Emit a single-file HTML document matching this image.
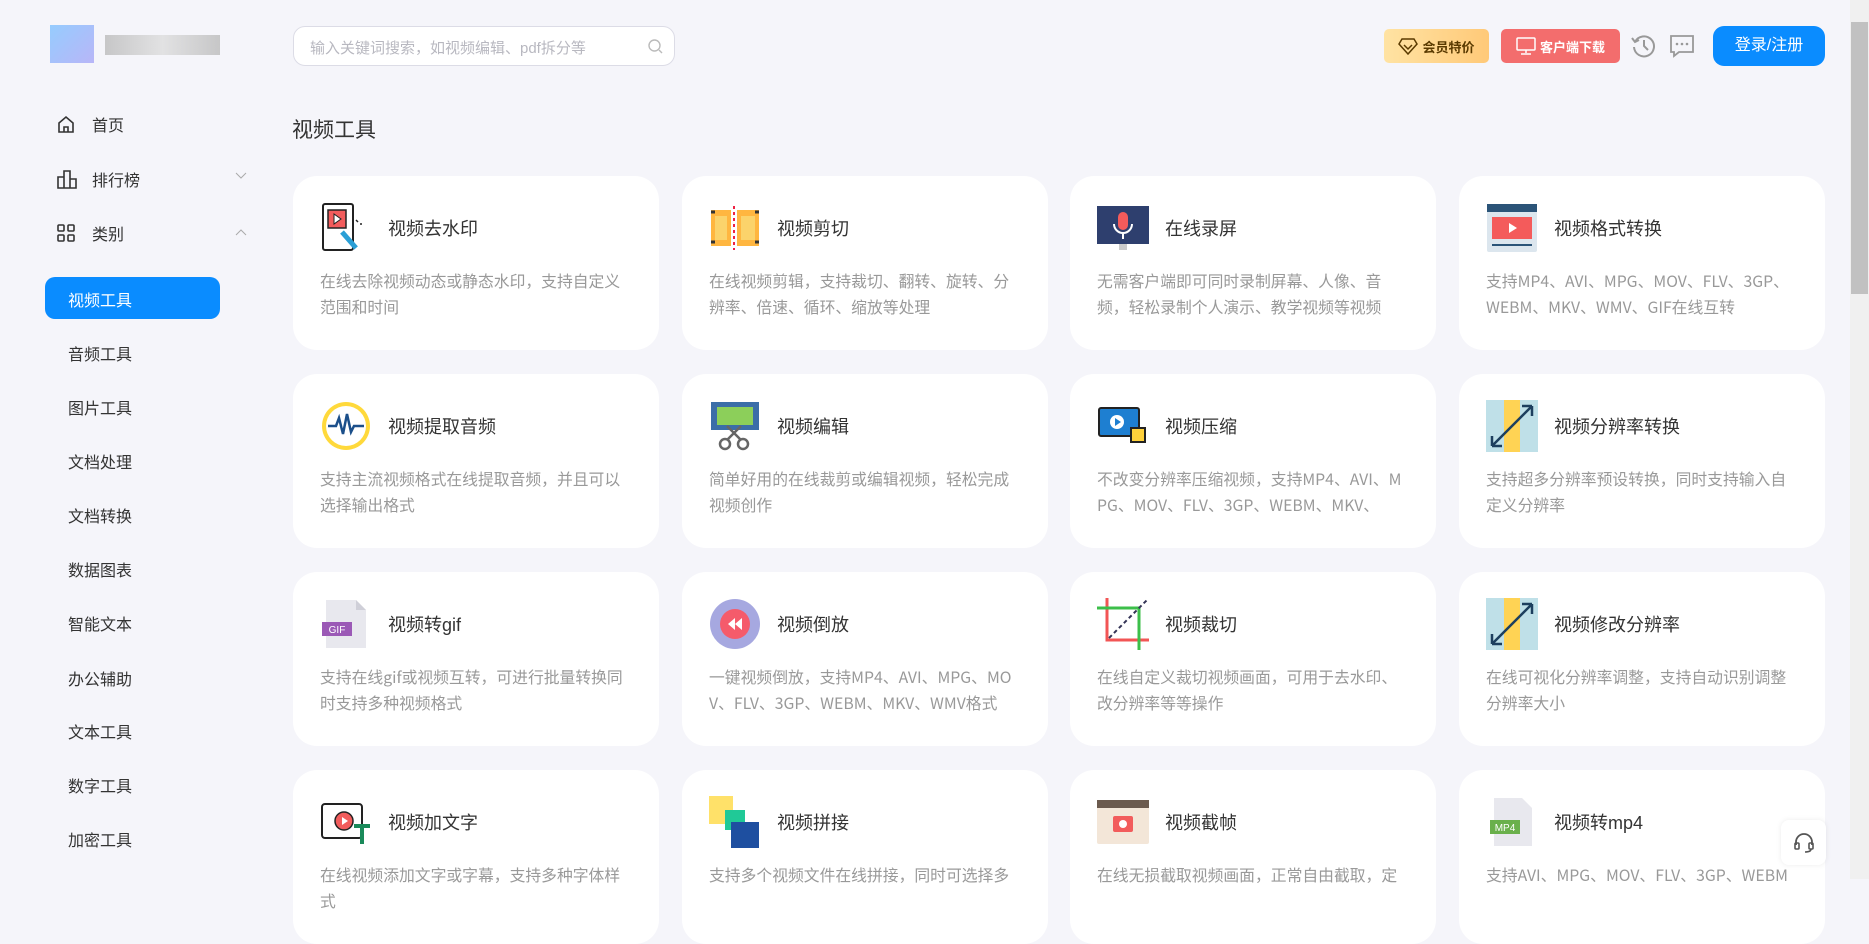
<!DOCTYPE html>
<html><head><meta charset="utf-8"><style>
*{margin:0;padding:0;box-sizing:border-box}
body{width:1869px;height:879px;overflow:hidden;background:#f5f5fa;font-family:"Liberation Sans","Noto Sans CJK SC",sans-serif;position:relative;color:#333}
.abs{position:absolute}
.logo{left:50px;top:22px;width:170px;height:44px}
.search{left:293px;top:26px;width:382px;height:40px;border:1px solid #dcdce6;border-radius:12px;background:#fff;font-size:15px;color:#b8b8c0;padding:10px 16px}
.nav{left:56px;font-size:16px;color:#333;display:flex;align-items:center}
.nav svg{margin-right:12px}
.sub{left:68px;font-size:16px;color:#333}
.active{left:45px;top:277px;width:175px;height:42px;background:#0a8cff;border-radius:10px;color:#fff;font-size:16px;padding:10px 23px}
h2{position:absolute;left:292px;top:114px;font-size:21px;font-weight:normal;color:#333}
.card{position:absolute;width:366px;height:174px;background:#fff;border-radius:24px}
.card .ic{position:absolute;left:27px;top:26px;width:52px;height:52px}
.card .t{position:absolute;left:95px;top:39px;font-size:18px;color:#333}
.card .d{position:absolute;left:27px;top:92px;width:314px;font-size:15.8px;line-height:26px;color:#999;font-family:"Noto Sans CJK SC","Liberation Sans",sans-serif;word-break:break-all}
.btn{top:29px;height:34px;border-radius:5px;font-size:13px;font-weight:bold;display:flex;align-items:center;justify-content:center}
</style></head><body>
<div class="abs logo"><div class="abs" style="left:0;top:3px;width:44px;height:38px;background:linear-gradient(135deg,#7ec2ff,#a9a6f7);opacity:.8"></div><div class="abs" style="left:55px;top:13px;width:115px;height:20px;background:linear-gradient(90deg,#bbb,#ddd,#bbb);opacity:.8"></div></div>
<div class="abs search">输入关键词搜索，如视频编辑、pdf拆分等<svg class="abs" style="right:10px;top:11px" width="17" height="17" viewBox="0 0 17 17"><circle cx="7.5" cy="7.5" r="5.5" fill="none" stroke="#bbb" stroke-width="1.4"/><path d="M12 12l3 3" stroke="#bbb" stroke-width="1.4"/></svg></div>
<div class="abs nav" style="top:112px"><svg width="20" height="20" viewBox="0 0 20 20"><path d="M3 9L10 3l7 6v9H3z M8 18v-5h4v5" fill="none" stroke="#333" stroke-width="1.6"/></svg><span style="margin-left:4px">首页</span></div>
<div class="abs nav" style="top:167px"><svg width="22" height="20" viewBox="0 0 22 20"><path d="M2 8h6v11H2z M8 2h6v17H8z M14 10h6v9h-6z" fill="none" stroke="#333" stroke-width="1.6"/></svg><span style="margin-left:2px">排行榜</span></div>
<div class="abs nav" style="top:221px"><svg width="20" height="20" viewBox="0 0 20 20"><rect x="2" y="2" width="6" height="6" rx="1" fill="none" stroke="#333" stroke-width="1.6"/><rect x="12" y="2" width="6" height="6" rx="1" fill="none" stroke="#333" stroke-width="1.6"/><rect x="2" y="12" width="6" height="6" rx="1" fill="none" stroke="#333" stroke-width="1.6"/><rect x="12" y="12" width="6" height="6" rx="1" fill="none" stroke="#333" stroke-width="1.6"/></svg><span style="margin-left:4px">类别</span></div>
<svg class="abs" style="left:235px;top:172px" width="12" height="8"><path d="M1 1l5 5 5-5" fill="none" stroke="#aaa"/></svg>
<svg class="abs" style="left:235px;top:228px" width="12" height="8"><path d="M1 7l5-5 5 5" fill="none" stroke="#aaa"/></svg>
<div class="abs active">视频工具</div>
<div class="abs sub" style="top:341px">音频工具</div>
<div class="abs sub" style="top:395px">图片工具</div>
<div class="abs sub" style="top:449px">文档处理</div>
<div class="abs sub" style="top:503px">文档转换</div>
<div class="abs sub" style="top:557px">数据图表</div>
<div class="abs sub" style="top:611px">智能文本</div>
<div class="abs sub" style="top:666px">办公辅助</div>
<div class="abs sub" style="top:719px">文本工具</div>
<div class="abs sub" style="top:773px">数字工具</div>
<div class="abs sub" style="top:827px">加密工具</div>

<div class="abs btn" style="left:1384px;width:105px;background:linear-gradient(90deg,#ffe3a3,#ffc978);color:#5a3a00"><svg width="20" height="18" viewBox="0 0 20 18" style="margin-right:4px"><path d="M4 2h12l3 5-9 10L1 7z M6 8l4 4 4-4" fill="none" stroke="#5a3a00" stroke-width="1.5"/></svg>会员特价</div>
<div class="abs btn" style="left:1501px;width:119px;background:#f36d6d;color:#fff"><svg width="20" height="18" viewBox="0 0 20 18" style="margin-right:4px"><rect x="1" y="1" width="18" height="12" rx="1" fill="none" stroke="#fff" stroke-width="1.5"/><path d="M10 13v3M5 17h10" stroke="#fff" stroke-width="1.5"/></svg>客户端下载</div>
<svg class="abs" style="left:1631px;top:33px" width="26" height="26" viewBox="0 0 26 26"><path d="M4 9A10 10 0 1 1 3 14" fill="none" stroke="#999" stroke-width="2"/><path d="M1 5l3 4 4-2" fill="none" stroke="#999" stroke-width="2"/><path d="M13 7v6l4 4" fill="none" stroke="#999" stroke-width="2"/></svg>
<svg class="abs" style="left:1669px;top:34px" width="26" height="24" viewBox="0 0 26 24"><path d="M2 2h22v16H10l-5 4v-4H2z" fill="none" stroke="#999" stroke-width="1.8"/><circle cx="8" cy="10" r="1.3" fill="#999"/><circle cx="13" cy="10" r="1.3" fill="#999"/><circle cx="18" cy="10" r="1.3" fill="#999"/></svg>
<div class="abs" style="left:1713px;top:26px;width:112px;height:40px;background:#0a8cff;border-radius:11px;color:#fff;font-size:16px;text-align:center;line-height:40px">登录/注册</div>
<div class="abs" style="left:1850px;top:0;width:19px;height:879px;background:#f0f0f0"></div>
<div class="abs" style="left:1851px;top:22px;width:17px;height:272px;background:#c1c1c1"></div>

<h2>视频工具</h2>

<div class="card" style="left:293px;top:176px"><svg class="ic" viewBox="0 0 52 52"><rect x="3" y="2" width="30" height="46" rx="2" fill="#fff" stroke="#222" stroke-width="2"/><rect x="8" y="8" width="18" height="18" fill="#f25c5c" stroke="#222" stroke-width="1.5"/><path d="M14 12v10l7-5z" fill="#fff" stroke="#222"/><path d="M22 30l14 16" stroke="#2a9fd6" stroke-width="5"/><path d="M36 18l2 2m0-4v0M40 22h2" stroke="#222" stroke-width="1.5"/></svg><div class="t">视频去水印</div><div class="d">在线去除视频动态或静态水印，支持自定义范围和时间</div></div>
<div class="card" style="left:682px;top:176px"><svg class="ic" viewBox="0 0 52 52"><rect x="2" y="8" width="20" height="36" fill="#ffb640"/><rect x="28" y="8" width="22" height="36" fill="#ffb640"/><path d="M25 4v44" stroke="#e24" stroke-width="2" stroke-dasharray="3 3"/><rect x="6" y="14" width="12" height="24" fill="#fbd36b"/><rect x="32" y="14" width="14" height="24" fill="#fbd36b"/><path d="M2 10h4M2 40h4M46 10h4M46 40h4" stroke="#333" stroke-width="3"/></svg><div class="t">视频剪切</div><div class="d">在线视频剪辑，支持裁切、翻转、旋转、分辨率、倍速、循环、缩放等处理</div></div>
<div class="card" style="left:1070px;top:176px"><svg class="ic" viewBox="0 0 52 52"><rect x="0" y="4" width="52" height="38" fill="#2e3f6e"/><rect x="21" y="10" width="10" height="18" rx="5" fill="#f45b5b"/><path d="M17 22a9 9 0 0 0 18 0M26 31v6" stroke="#fff" stroke-width="2" fill="none"/><rect x="22" y="42" width="8" height="6" fill="#ccc"/></svg><div class="t">在线录屏</div><div class="d">无需客户端即可同时录制屏幕、人像、音频，轻松录制个人演示、教学视频等视频</div></div>
<div class="card" style="left:1459px;top:176px"><svg class="ic" viewBox="0 0 52 52"><rect x="1" y="2" width="50" height="48" rx="2" fill="#dce6ee"/><rect x="1" y="2" width="50" height="8" fill="#2b5478"/><rect x="6" y="15" width="40" height="22" fill="#f45b5b"/><path d="M23 21v10l8-5z" fill="#fff"/><path d="M6 43h40" stroke="#2b5478" stroke-width="2"/></svg><div class="t">视频格式转换</div><div class="d">支持MP4、AVI、MPG、MOV、FLV、3GP、WEBM、MKV、WMV、GIF在线互转</div></div>

<div class="card" style="left:293px;top:374px"><svg class="ic" viewBox="0 0 52 52"><circle cx="26" cy="26" r="24" fill="#ffd93b"/><circle cx="26" cy="26" r="20" fill="#fff"/><path d="M8 26h8l3-8 4 16 4-20 4 18 3-6h10" fill="none" stroke="#1b4f8a" stroke-width="2.5"/></svg><div class="t">视频提取音频</div><div class="d">支持主流视频格式在线提取音频，并且可以选择输出格式</div></div>
<div class="card" style="left:682px;top:374px"><svg class="ic" viewBox="0 0 52 52"><rect x="2" y="2" width="48" height="28" fill="#3b6ea8"/><rect x="8" y="7" width="36" height="18" fill="#8ccf5a"/><circle cx="16" cy="44" r="5" fill="none" stroke="#666" stroke-width="2.5"/><circle cx="34" cy="44" r="5" fill="none" stroke="#666" stroke-width="2.5"/><path d="M18 40l14-14M32 40L18 26" stroke="#666" stroke-width="2.5"/></svg><div class="t">视频编辑</div><div class="d">简单好用的在线裁剪或编辑视频，轻松完成视频创作</div></div>
<div class="card" style="left:1070px;top:374px"><svg class="ic" viewBox="0 0 52 52"><rect x="2" y="8" width="40" height="28" rx="2" fill="#1e7fd1" stroke="#222" stroke-width="2"/><circle cx="20" cy="22" r="7" fill="#fff"/><path d="M18 18v8l6-4z" fill="#1e7fd1"/><rect x="34" y="28" width="14" height="14" fill="#ffd13b" stroke="#222" stroke-width="2"/></svg><div class="t">视频压缩</div><div class="d">不改变分辨率压缩视频，支持MP4、AVI、MPG、MOV、FLV、3GP、WEBM、MKV、</div></div>
<div class="card" style="left:1459px;top:374px"><svg class="ic" viewBox="0 0 52 52"><rect x="0" y="0" width="52" height="52" fill="#bfe0e8"/><rect x="18" y="0" width="16" height="52" fill="#ffd354"/><path d="M6 46L46 6M6 46v-10M6 46h10M46 6v10M46 6H36" stroke="#1d3f5e" stroke-width="2.5" fill="none"/></svg><div class="t">视频分辨率转换</div><div class="d">支持超多分辨率预设转换，同时支持输入自定义分辨率</div></div>

<div class="card" style="left:293px;top:572px"><svg class="ic" viewBox="0 0 52 52"><path d="M6 2h30l10 10v38H6z" fill="#e8e8ee"/><path d="M36 2v10h10" fill="#cfcfd8"/><rect x="2" y="24" width="30" height="14" fill="#9b59b6"/><text x="17" y="35" font-size="10" fill="#fff" text-anchor="middle" font-family="Liberation Sans">GIF</text></svg><div class="t">视频转gif</div><div class="d">支持在线gif或视频互转，可进行批量转换同时支持多种视频格式</div></div>
<div class="card" style="left:682px;top:572px"><svg class="ic" viewBox="0 0 52 52"><circle cx="26" cy="26" r="25" fill="#a6a8e0"/><circle cx="26" cy="26" r="15" fill="#f55b6b"/><path d="M26 20l-7 6 7 6zM33 20l-7 6 7 6z" fill="#fff"/></svg><div class="t">视频倒放</div><div class="d">一键视频倒放，支持MP4、AVI、MPG、MOV、FLV、3GP、WEBM、MKV、WMV格式</div></div>
<div class="card" style="left:1070px;top:572px"><svg class="ic" viewBox="0 0 52 52"><path d="M10 0v42h42" fill="none" stroke="#f25555" stroke-width="3"/><path d="M0 10h42v42" fill="none" stroke="#3cbf4a" stroke-width="3"/><path d="M12 40L50 2" stroke="#335" stroke-width="2" stroke-dasharray="4 3"/></svg><div class="t">视频裁切</div><div class="d">在线自定义裁切视频画面，可用于去水印、改分辨率等等操作</div></div>
<div class="card" style="left:1459px;top:572px"><svg class="ic" viewBox="0 0 52 52"><rect x="0" y="0" width="52" height="52" fill="#bfe0e8"/><rect x="18" y="0" width="16" height="52" fill="#ffd354"/><path d="M6 46L46 6M6 46v-10M6 46h10M46 6v10M46 6H36" stroke="#1d3f5e" stroke-width="2.5" fill="none"/></svg><div class="t">视频修改分辨率</div><div class="d">在线可视化分辨率调整，支持自动识别调整分辨率大小</div></div>

<div class="card" style="left:293px;top:770px"><svg class="ic" viewBox="0 0 52 52"><rect x="2" y="8" width="40" height="34" rx="3" fill="#fff" stroke="#222" stroke-width="2"/><circle cx="24" cy="25" r="9" fill="#f25c5c" stroke="#222" stroke-width="1.5"/><path d="M22 21v8l6-4z" fill="#fff"/><path d="M34 30h16M42 30v18" stroke="#1a8a5a" stroke-width="4"/></svg><div class="t">视频加文字</div><div class="d">在线视频添加文字或字幕，支持多种字体样式</div></div>
<div class="card" style="left:682px;top:770px"><svg class="ic" viewBox="0 0 52 52"><rect x="0" y="0" width="24" height="28" fill="#ffe169"/><rect x="16" y="14" width="20" height="20" fill="#20c997"/><rect x="22" y="26" width="28" height="26" fill="#1e4fa0"/></svg><div class="t">视频拼接</div><div class="d">支持多个视频文件在线拼接，同时可选择多</div></div>
<div class="card" style="left:1070px;top:770px"><svg class="ic" viewBox="0 0 52 52"><rect x="0" y="4" width="52" height="44" rx="2" fill="#f3e6d8"/><rect x="0" y="4" width="52" height="8" fill="#6b5a4e"/><rect x="16" y="20" width="20" height="16" rx="2" fill="#f25c5c"/><circle cx="26" cy="28" r="4" fill="#fff"/></svg><div class="t">视频截帧</div><div class="d">在线无损截取视频画面，正常自由截取，定</div></div>
<div class="card" style="left:1459px;top:770px"><svg class="ic" viewBox="0 0 52 52"><path d="M8 2h28l10 10v38H8z" fill="#e8e8ee"/><rect x="4" y="24" width="30" height="14" fill="#6ab04c"/><text x="19" y="35" font-size="10" fill="#fff" text-anchor="middle" font-family="Liberation Sans">MP4</text></svg><div class="t">视频转mp4</div><div class="d">支持AVI、MPG、MOV、FLV、3GP、WEBM</div></div>

<div class="abs" style="left:1781px;top:820px;width:45px;height:45px;background:#fff;border-radius:8px;box-shadow:0 0 6px rgba(0,0,0,.08)"><svg class="abs" style="left:11px;top:11px" width="24" height="24" viewBox="0 0 24 24"><path d="M4 14v-3a8 8 0 0 1 16 0v3" fill="none" stroke="#555" stroke-width="1.8"/><rect x="3" y="12" width="4" height="6" rx="1" fill="none" stroke="#555" stroke-width="1.6"/><rect x="17" y="12" width="4" height="6" rx="1" fill="none" stroke="#555" stroke-width="1.6"/><path d="M19 18q0 3-6 3" fill="none" stroke="#555" stroke-width="1.6"/></svg></div>
</body></html>
